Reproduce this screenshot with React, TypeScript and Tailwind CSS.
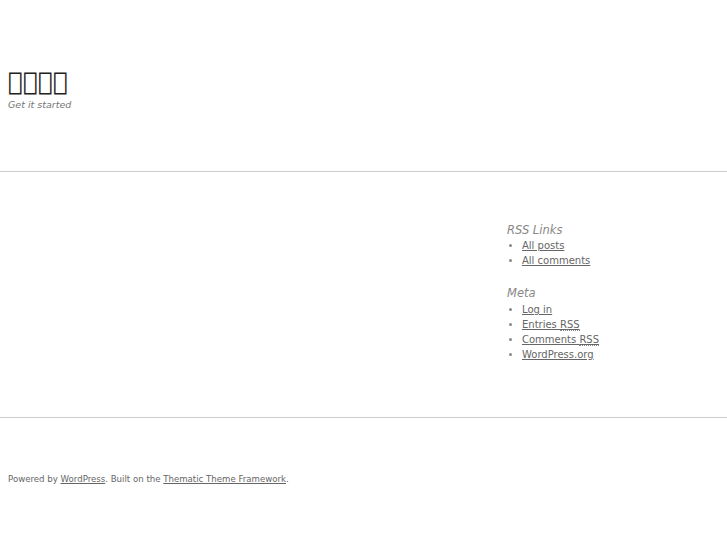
export default function App() {
  return (
    <div className="min-h-[545px] bg-white font-['DejaVu_Sans',sans-serif] text-[#666]">
      <header className="h-[172px] border-b border-[#ccc] px-2 pt-[66px]">
        <h1 className="text-[25px] leading-[32px] text-[#222]">{"\uE000\uE001\uE002\uE003"}</h1>
        <p className="text-[9.5px] italic leading-[14px] text-[#777]">Get it started</p>
      </header>
      <main className="flex h-[246px] border-b border-[#ccc]">
        <div className="flex-1" />
        <aside className="w-[220px] pt-[50px] text-[10px]">
          <h3 className="text-[11.5px] italic leading-[16px] text-[#888]">RSS Links</h3>
          <ul className="ml-[15px] list-disc leading-[15px] marker:text-[#888]">
            <li><a className="underline" href="#">All posts</a></li>
            <li><a className="underline" href="#">All comments</a></li>
          </ul>
          <h3 className="mt-[17px] text-[11.5px] italic leading-[16px] text-[#888]">Meta</h3>
          <ul className="ml-[15px] list-disc leading-[15px] marker:text-[#888]">
            <li className="pt-[1px]"><a className="underline" href="#">Log in</a></li>
            <li>
              <a className="underline" href="#">
                Entries <abbr className="no-underline border-b border-dotted border-[#888]">RSS</abbr>
              </a>
            </li>
            <li>
              <a className="underline" href="#">
                Comments <abbr className="no-underline border-b border-dotted border-[#888]">RSS</abbr>
              </a>
            </li>
            <li><a className="underline" href="#">WordPress.org</a></li>
          </ul>
        </aside>
      </main>
      <footer className="px-2 pt-[55px] text-[8.6px] leading-[12px] text-[#666]">
        Powered by <a className="underline" href="#">WordPress</a>. Built on the{" "}
        <a className="underline" href="#">Thematic Theme Framework</a>.
      </footer>
    </div>
  );
}
